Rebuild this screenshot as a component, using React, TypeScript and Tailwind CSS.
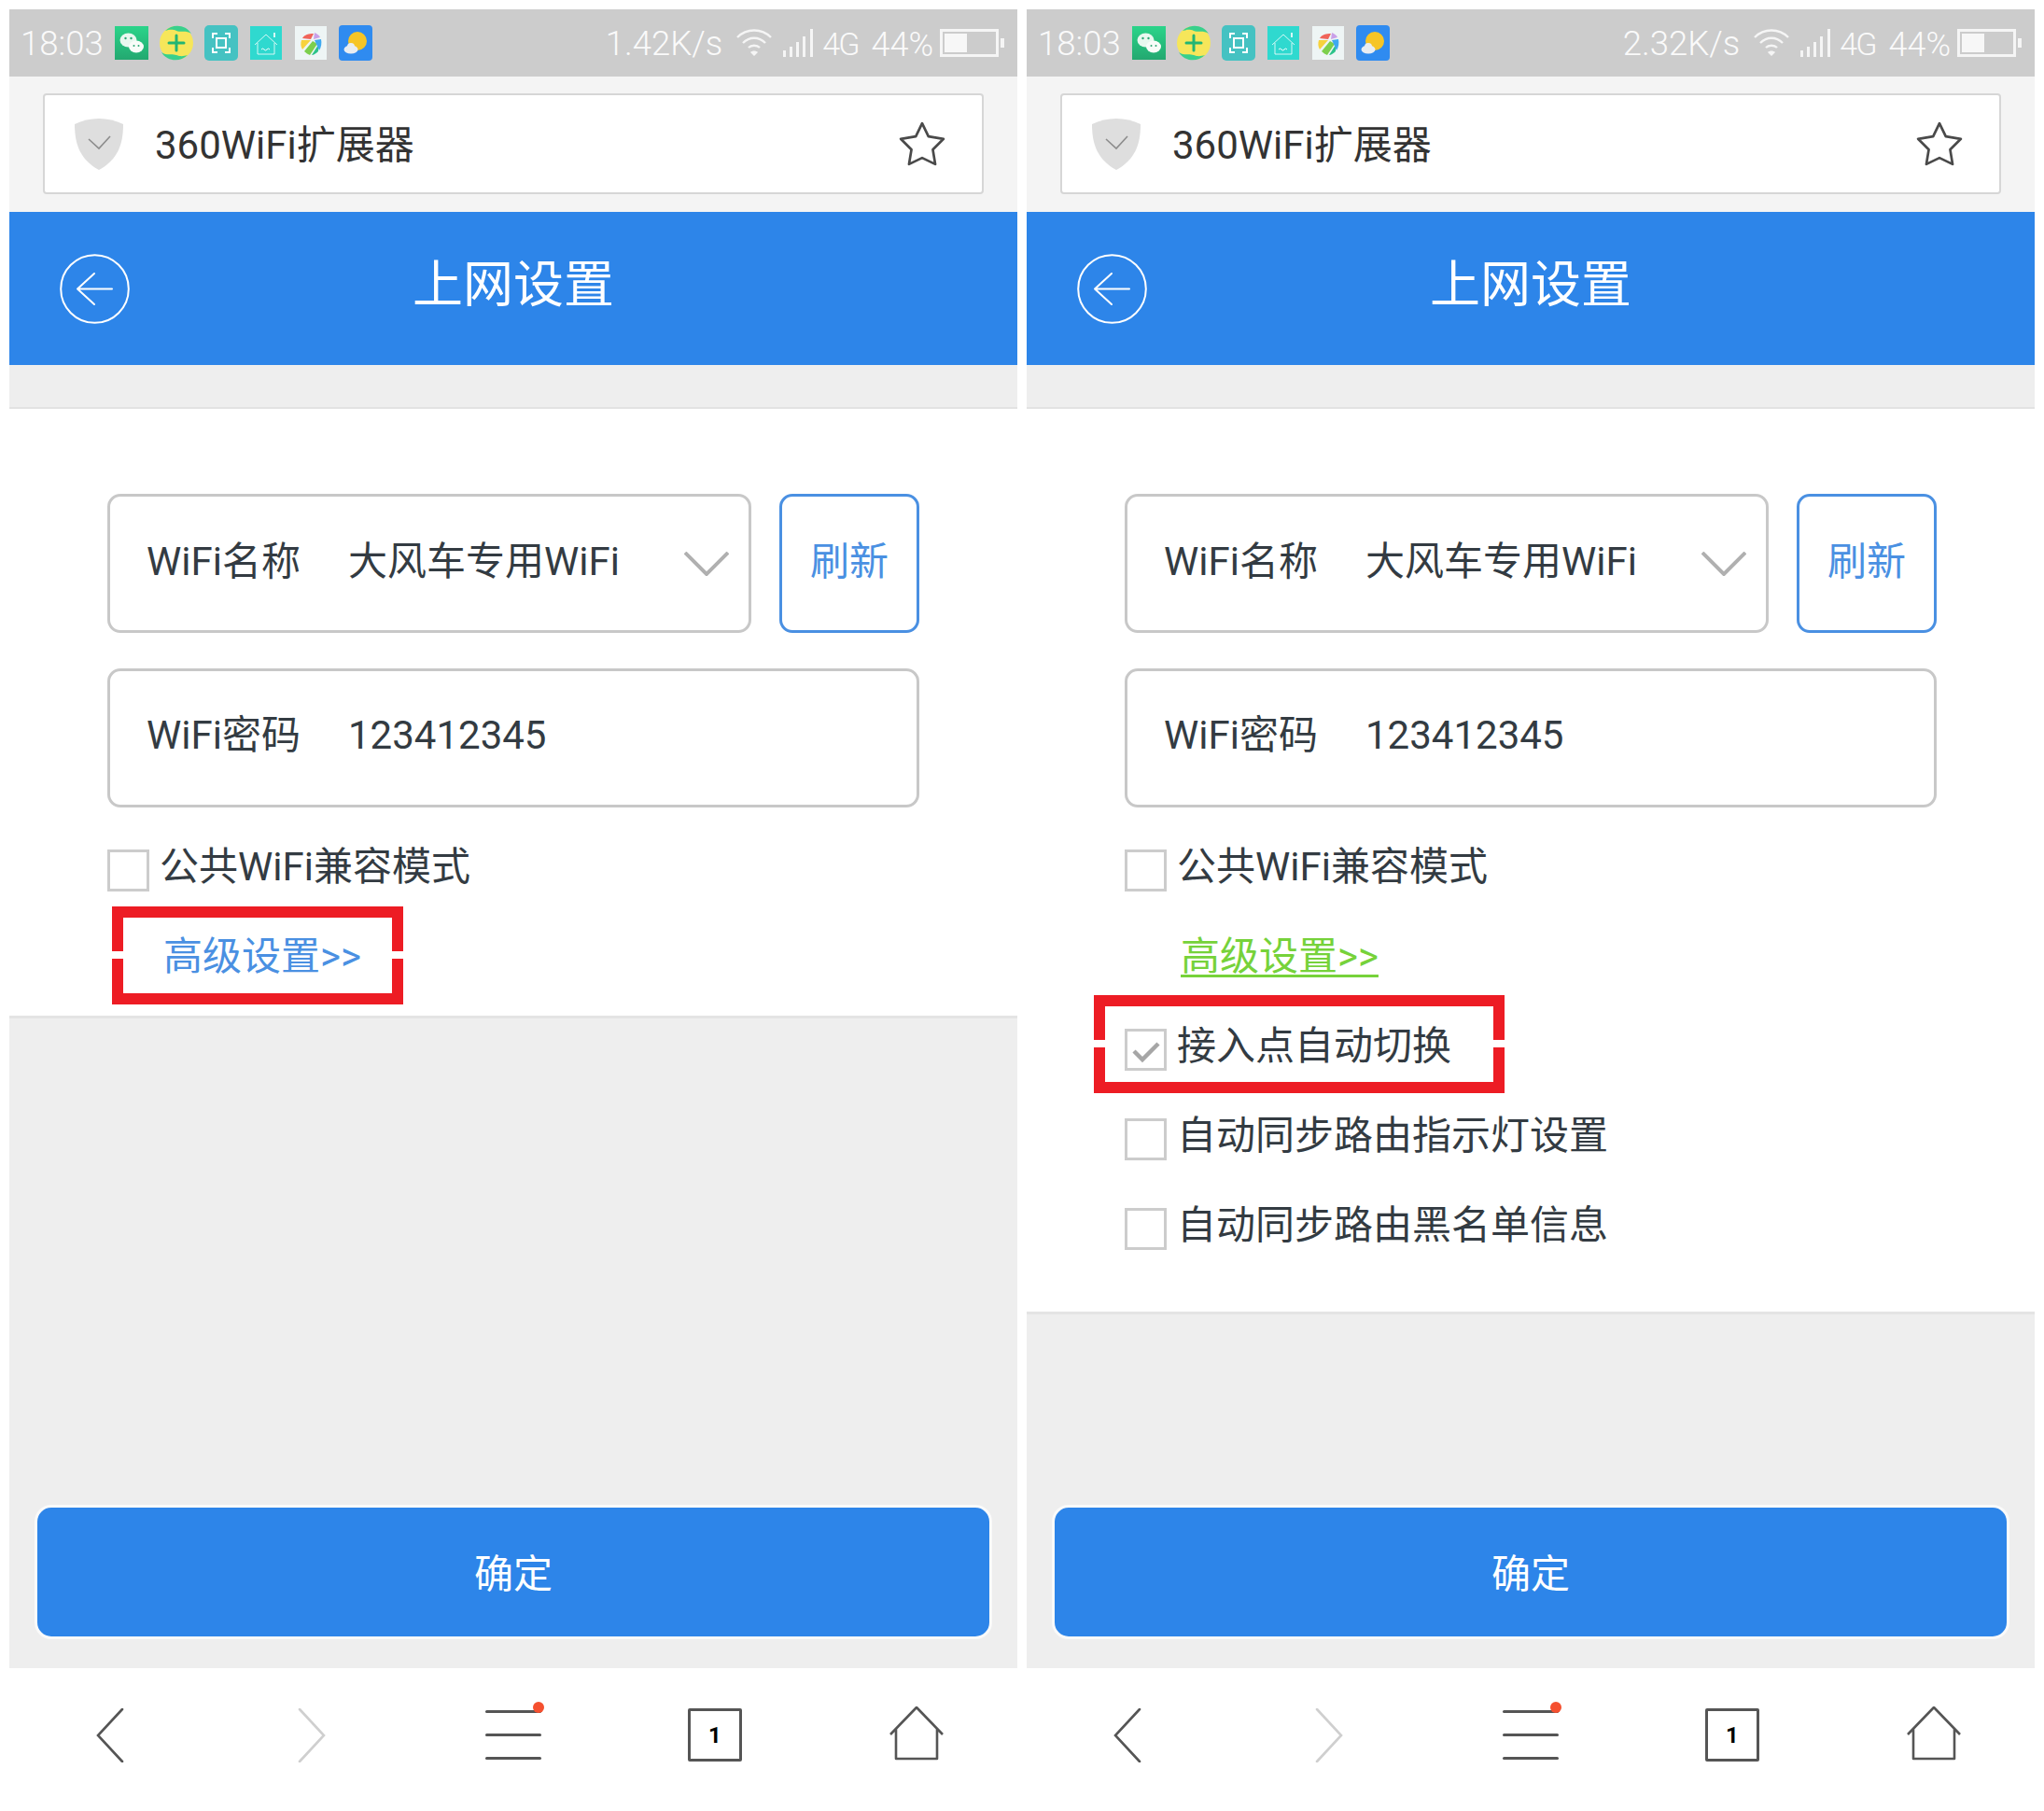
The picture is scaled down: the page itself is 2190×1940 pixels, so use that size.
import React from 'react';

function WeChatIcon() {
  return (
    <svg width="36" height="36" viewBox="0 0 36 36">
      <defs>
        <linearGradient id="wechatBg" x1="0" y1="0" x2="0" y2="1">
          <stop offset="0" stopColor="#2bd48a" />
          <stop offset="1" stopColor="#23a870" />
        </linearGradient>
      </defs>
      <rect width="36" height="36" fill="url(#wechatBg)" />
      <ellipse cx="14.5" cy="15" rx="9" ry="7.5" fill="#e8f8ef" />
      <ellipse cx="23" cy="22" rx="8" ry="6.5" fill="#f8fcf8" />
      <circle cx="11.5" cy="13" r="1.2" fill="#2aa874" />
      <circle cx="17.5" cy="13" r="1.2" fill="#2aa874" />
      <circle cx="20.5" cy="21" r="1" fill="#2aa874" />
      <circle cx="25.5" cy="21" r="1" fill="#2aa874" />
    </svg>
  );
}

function PlusBadgeIcon() {
  return (
    <svg width="36" height="38" viewBox="0 0 36 38">
      <circle cx="18" cy="19" r="18" fill="#f6e65a" />
      <path d="M6 6 C14 -2 28 -1 34 9 C28 5 24 8 18 6 C13 4 10 5 6 6 Z" fill="#38d08c" />
      <path d="M30 32 C22 40 8 39 2 29 C8 33 12 30 18 32 C23 34 26 33 30 32 Z" fill="#38d08c" />
      <path d="M18 11 V27 M10 19 H26" stroke="#22b573" strokeWidth="3" strokeLinecap="round" />
    </svg>
  );
}

function ScanIcon() {
  return (
    <svg width="36" height="38" viewBox="0 0 36 38">
      <rect width="36" height="38" rx="5" fill="#45c2c2" />
      <path d="M9 14 V9 H14 M22 9 H27 V14 M27 24 V29 H22 M14 29 H9 V24" stroke="#fff" strokeWidth="2" fill="none" />
      <rect x="13" y="14" width="10" height="10" stroke="#fff" strokeWidth="2" fill="none" />
    </svg>
  );
}

function HouseIcon() {
  return (
    <svg width="34" height="36" viewBox="0 0 34 36">
      <rect width="34" height="36" fill="#2fd9cf" />
      <path d="M5 20 L17 9 L29 20 M8 18 V30 H26 V18" stroke="#fff" strokeWidth="0.8" fill="none" />
      <path d="M12 25 q1.5 -2 3 0 q1.5 2 3 0 q1.5 -2 3 0" stroke="#fff" strokeWidth="1" fill="none" />
      <path d="M26 7 V12" stroke="#fff" strokeWidth="1.6" />
    </svg>
  );
}

function PinwheelIcon() {
  return (
    <svg width="34" height="36" viewBox="0 0 34 36">
      <rect width="34" height="36" fill="#eef5f5" />
      <path d="M8 13 C10 9 15 8 20 8 L17 14 Z" fill="#f0645a" />
      <path d="M21 7 C24 8 26 10 27 12 L20 14 Z" fill="#c9a0e8" />
      <path d="M7 15 L17 15 L8 25 C6 22 6 18 7 15 Z" fill="#f7d23e" />
      <path d="M19 16 L10 27 C12 29 14 30 16 31 L24 19 Z" fill="#7ccf4c" />
      <path d="M25 20 L18 31 C20 31 23 29 25 27 Z" fill="#2cc38a" />
      <path d="M21 15 L28 14 C29 18 28 23 26 26 Z" fill="#3fa9f0" />
    </svg>
  );
}

function WeatherIcon() {
  return (
    <svg width="36" height="38" viewBox="0 0 36 38">
      <rect width="36" height="38" rx="4" fill="#2f8bf0" />
      <circle cx="20" cy="17" r="10" fill="#f6c526" />
      <ellipse cx="13" cy="26" rx="7.5" ry="4.5" fill="#e8edf2" />
      <circle cx="13" cy="23" r="4" fill="#e8edf2" />
    </svg>
  );
}

function WifiIcon() {
  return (
    <svg width="38" height="30" viewBox="0 0 38 30" fill="none" stroke="#f5f5f5" strokeWidth="2.4">
      <path d="M1 9 C11 -1 27 -1 37 9" />
      <path d="M7 15 C14 8 24 8 31 15" />
      <path d="M13 20 C16 17 22 17 25 20" />
      <path d="M19 29 L15 25 C17 23 21 23 23 25 Z" fill="#f5f5f5" stroke="none" />
    </svg>
  );
}

function SignalIcon() {
  return (
    <svg width="34" height="30" viewBox="0 0 34 30" fill="#f5f5f5">
      <rect x="0" y="23" width="3" height="7" />
      <rect x="7" y="19" width="3" height="11" />
      <rect x="14" y="14" width="3" height="16" />
      <rect x="21" y="8" width="3" height="22" />
      <rect x="29" y="0" width="3" height="30" />
    </svg>
  );
}

function BatteryIcon() {
  return (
    <svg width="69" height="30" viewBox="0 0 69 30">
      <rect x="1.5" y="1.5" width="60" height="27" fill="none" stroke="#f5f5f5" strokeWidth="3" />
      <rect x="5" y="5" width="24" height="20" fill="#f7f7f7" />
      <rect x="65" y="10" width="4" height="10" fill="#f5f5f5" />
    </svg>
  );
}

function ShieldIcon() {
  return (
    <svg width="52" height="55" viewBox="0 0 52 55">
      <path d="M0 6 C16 -2 36 -2 52 6 C52 28 46 44 26 55 C6 44 0 28 0 6 Z" fill="#dedede" />
      <path d="M15 22 L26 32 L38 19" fill="none" stroke="#8c8c8c" strokeWidth="1.6" />
    </svg>
  );
}

function StarIcon() {
  return (
    <svg width="50" height="48" viewBox="0 0 48 46">
      <path
        d="M24 2 L30.5 15.5 L46 18 L35 29 L37.5 44 L24 37.5 L10.5 44 L13 29 L2 18 L17.5 15.5 Z"
        fill="none"
        stroke="#4a4a4a"
        strokeWidth="2.6"
        strokeLinejoin="round"
      />
    </svg>
  );
}

function BackCircleIcon() {
  return (
    <svg width="75" height="75" viewBox="0 0 75 75" fill="none" stroke="#fff" strokeWidth="2">
      <circle cx="37.5" cy="37.5" r="36.3" />
      <path d="M19 37.5 H56 M37 21 L19 37.5 L37 54" strokeLinecap="round" strokeLinejoin="round" />
    </svg>
  );
}

function Checkbox({ checked }: { checked?: boolean }) {
  return (
    <div className="w-[45px] h-[45px] border-[3px] border-[#cccccc] bg-white shrink-0 flex items-center justify-center">
      {checked && (
        <svg width="30" height="24" viewBox="0 0 30 24" className="mt-[4px]">
          <path d="M2 11 L11 20 L28 3" fill="none" stroke="#a6a6a6" strokeWidth="4.5" />
        </svg>
      )}
    </div>
  );
}

function CheckRow({ label, checked }: { label: string; checked?: boolean }) {
  return (
    <div className="flex h-[45px] items-start">
      <Checkbox checked={checked} />
      <span className="ml-[11px] -mt-[4px] leading-[45px] whitespace-nowrap">{label}</span>
    </div>
  );
}

// red annotation frame, the side gaps are white notches in the screenshot
function RedFrame({ className }: { className: string }) {
  return (
    <div className={`absolute border-[12px] border-[#ed1c24] pointer-events-none ${className}`}>
      <div className="absolute top-[36px] -left-[12px] w-[12px] h-[8px] bg-white"></div>
      <div className="absolute top-[36px] -right-[12px] w-[12px] h-[8px] bg-white"></div>
    </div>
  );
}

function BottomNav() {
  return (
    <div className="h-[143px] bg-white grid grid-cols-5 items-center text-[#555555]">
      <div className="flex justify-center">
        <svg width="30" height="58" viewBox="0 0 30 58" fill="none" stroke="#555555" strokeWidth="2.6" strokeLinecap="round">
          <path d="M28 1 L2 29 L28 57" />
        </svg>
      </div>
      <div className="flex justify-center">
        <svg width="30" height="58" viewBox="0 0 30 58" fill="none" stroke="#cfcfcf" strokeWidth="2.6" strokeLinecap="round">
          <path d="M2 1 L28 29 L2 57" />
        </svg>
      </div>
      <div className="flex justify-center">
        <div className="relative w-[60px] flex flex-col gap-[22px]">
          <div className="h-[3px] rounded-full bg-[#555555]"></div>
          <div className="h-[3px] rounded-full bg-[#555555]"></div>
          <div className="h-[3px] rounded-full bg-[#555555]"></div>
          <div className="absolute -top-[9px] -right-[3px] w-[12px] h-[12px] rounded-full bg-[#f5502f]"></div>
        </div>
      </div>
      <div className="flex justify-center">
        <div className="w-[58px] h-[57px] border-[3px] border-[#555555] rounded-[2px] flex items-center justify-center text-[24px] leading-none font-bold text-black">
          1
        </div>
      </div>
      <div className="flex justify-center -mt-[3px]">
        <svg width="58" height="58" viewBox="0 0 58 58" fill="none" stroke="#555555" strokeWidth="2.6" strokeLinejoin="round">
          <path d="M1 30 L29 1 L57 30 M7 24 V56 H51 V24" />
        </svg>
      </div>
    </div>
  );
}

function Phone({ speed, advanced }: { speed: string; advanced?: boolean }) {
  return (
    <div className="w-[1080px] h-[1920px] flex flex-col bg-white">
      {/* Status bar */}
      <div className="h-[72px] bg-[#cccccc] flex items-center pl-[12px] pr-[14px] text-[#fafafa] text-[36.5px] font-light">
        <span className="w-[101px] leading-none mt-[3px]">18:03</span>
        <div className="flex items-center gap-[12px]">
          <WeChatIcon />
          <PlusBadgeIcon />
          <ScanIcon />
          <div className="w-[36px] flex justify-center"><HouseIcon /></div>
          <div className="w-[36px] flex justify-center"><PinwheelIcon /></div>
          <WeatherIcon />
        </div>
        <span className="ml-auto leading-none mt-[3px]">{speed}</span>
        <div className="ml-[15px]"><WifiIcon /></div>
        <div className="ml-[12px]"><SignalIcon /></div>
        <span className="ml-[8px] text-[34px] tracking-[-2px] leading-none mt-[1px]">4G</span>
        <span className="ml-[14px] text-[36px] leading-none mt-[3px]">44%</span>
        <div className="ml-[7px]"><BatteryIcon /></div>
      </div>

      {/* Address bar */}
      <div className="h-[145px] bg-[#f4f4f4] pt-[18px] px-[36px]">
        <div className="h-[108px] bg-white border-2 border-[#d6d6d6] rounded-[4px] flex items-center pl-[32px] pr-[39px] text-[42px] text-[#333333]">
          <ShieldIcon />
          <span className="ml-[34px] flex-1 mt-[2px]">360WiFi扩展器</span>
          <StarIcon />
        </div>
      </div>

      {/* Title bar */}
      <div className="h-[164px] bg-[#2d85e9] grid grid-cols-[1fr_auto_1fr] items-center text-white">
        <div className="pl-[54px]"><BackCircleIcon /></div>
        <span className="text-[54px] font-normal leading-none -mt-[6px]">上网设置</span>
        <div></div>
      </div>
      <div className="h-[47px] bg-[#eeeeee] border-b-2 border-[#e2e2e2]"></div>

      {/* Form */}
      <div className={`px-[105px] pt-[91px] text-[42px] text-[#333b42] ${advanced ? 'pb-[66px]' : 'pb-[37px]'}`}>
        <div className="flex gap-[30px]">
          <div className="w-[690px] h-[149px] border-[3px] border-[#c8c8c8] rounded-[14px] flex items-center pl-[39px] pr-[21px]">
            <span className="w-[216px] -mt-[4px]">WiFi名称</span>
            <span className="flex-1 -mt-[4px]">大风车专用WiFi</span>
            <svg width="48" height="26" viewBox="0 0 48 26" fill="none" stroke="#b0b0b0" strokeWidth="4">
              <path d="M1 1 L24 24 L47 1" />
            </svg>
          </div>
          <div className="w-[150px] h-[149px] border-[3px] border-[#4a90e2] rounded-[14px] flex items-center justify-center text-[#4a90e2]">
            <span className="-mt-[4px]">刷新</span>
          </div>
        </div>
        <div className="mt-[38px] h-[149px] border-[3px] border-[#c8c8c8] rounded-[14px] flex items-center pl-[39px]">
          <span className="w-[216px] -mt-[6px]">WiFi密码</span>
          <span className="-mt-[6px]">123412345</span>
        </div>
        <div className="mt-[45px] flex flex-col gap-[51px]">
          <CheckRow label="公共WiFi兼容模式" />
          <div className="relative h-[45px]">
            <span
              className={`absolute left-[60px] -top-[4px] leading-[45px] whitespace-nowrap ${
                advanced ? 'text-[#76d23a] underline decoration-[3px] underline-offset-[5px]' : 'text-[#4a90e2]'
              }`}
            >
              高级设置&gt;&gt;
            </span>
            {!advanced && <RedFrame className="left-[5px] -top-[35px] w-[312px] h-[105px]" />}
            {advanced && <RedFrame className="-left-[33px] top-[60px] w-[440px] h-[105px]" />}
          </div>
          {advanced && (
            <>
              <CheckRow label="接入点自动切换" checked />
              <CheckRow label="自动同步路由指示灯设置" />
              <CheckRow label="自动同步路由黑名单信息" />
            </>
          )}
        </div>
      </div>

      {/* Footer with confirm button */}
      <div className="flex-1 bg-[#eeeeee] border-t-[3px] border-[#e4e4e4] flex flex-col justify-end px-[27px] pb-[31px]">
        <div className="h-[144px] bg-[#2d85e9] border-[3px] border-[#fafafa] rounded-[18px] flex items-center justify-center text-[42px] text-white">
          <span className="mt-[4px]">确定</span>
        </div>
      </div>

      <BottomNav />
    </div>
  );
}

export default function App() {
  return (
    <div className="w-[2190px] h-[1940px] bg-white p-[10px] flex gap-[10px] font-['Roboto','Noto_Sans_CJK_SC',sans-serif]">
      <Phone speed="1.42K/s" />
      <Phone speed="2.32K/s" advanced />
    </div>
  );
}
